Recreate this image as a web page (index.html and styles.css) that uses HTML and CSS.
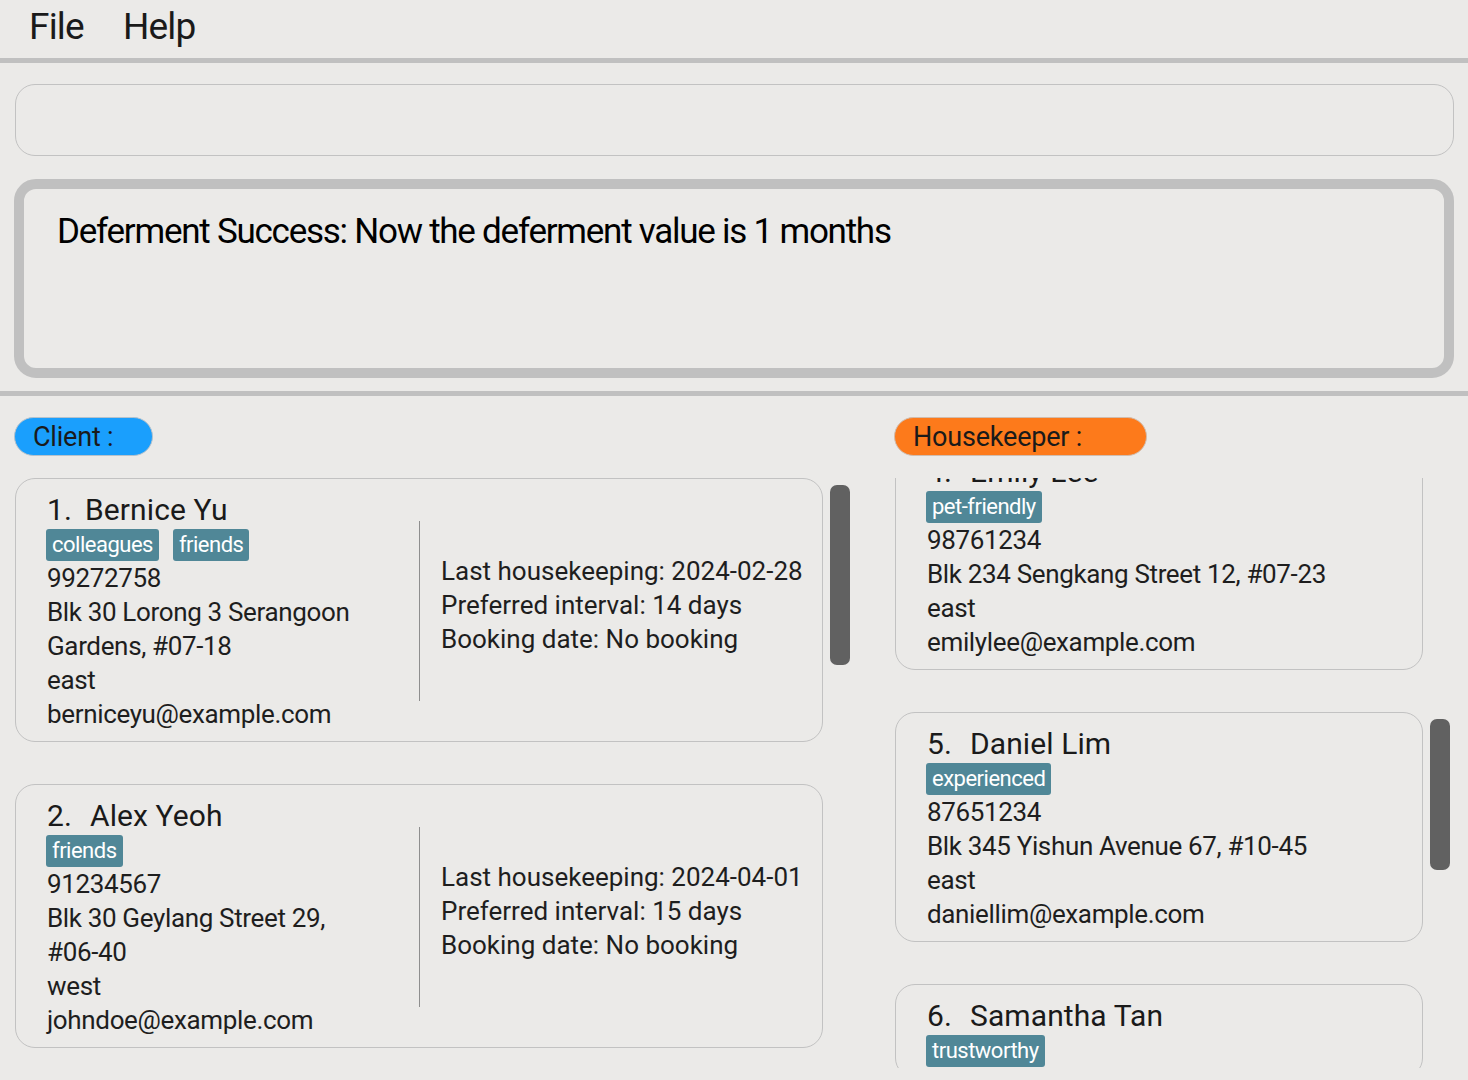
FILE: index.html
```html
<!DOCTYPE html>
<html lang="en">
<head>
<meta charset="utf-8">
<title>Housekeeping Hub</title>
<link rel="stylesheet" href="styles.css">
</head>
<body>
<header class="menubar">
  <span class="menu-item">File</span>
  <span class="menu-item">Help</span>
</header>

<section class="top">
  <div class="command-box"></div>
  <div class="result-box">
    <p class="result-text">Deferment Success: Now the deferment value is 1 months</p>
  </div>
</section>

<main class="lists">
  <section class="panel">
    <div class="pill pill-client">Client :</div>
    <div class="viewport">
      <div class="cards">
        <article class="card">
          <div class="card-left">
            <div class="name"><span class="idx idx-narrow">1.</span>Bernice Yu</div>
            <div class="tags"><span class="tag">colleagues</span><span class="tag">friends</span></div>
            <div class="line">99272758</div>
            <div class="line">Blk 30 Lorong 3 Serangoon Gardens, #07-18</div>
            <div class="line">east</div>
            <div class="line">berniceyu@example.com</div>
          </div>
          <div class="card-right">
            <div class="line">Last housekeeping: 2024-02-28</div>
            <div class="line">Preferred interval: 14 days</div>
            <div class="line">Booking date: No booking</div>
          </div>
        </article>
        <article class="card">
          <div class="card-left">
            <div class="name"><span class="idx">2.</span>Alex Yeoh</div>
            <div class="tags"><span class="tag">friends</span></div>
            <div class="line">91234567</div>
            <div class="line">Blk 30 Geylang Street 29, <span class="nowrap">#06-40</span></div>
            <div class="line">west</div>
            <div class="line">johndoe@example.com</div>
          </div>
          <div class="card-right">
            <div class="line">Last housekeeping: 2024-04-01</div>
            <div class="line">Preferred interval: 15 days</div>
            <div class="line">Booking date: No booking</div>
          </div>
        </article>
      </div>
      <div class="scroll-track"><div class="scroll-thumb" style="margin-top:7px;height:180px"></div></div>
    </div>
  </section>

  <section class="panel">
    <div class="pill pill-hk">Housekeeper :</div>
    <div class="viewport">
      <div class="cards cards-scrolled">
        <article class="card card-hk">
          <div class="card-left">
            <div class="name"><span class="idx">4.</span>Emily Lee</div>
            <div class="tags"><span class="tag">pet-friendly</span></div>
            <div class="line">98761234</div>
            <div class="line">Blk 234 Sengkang Street 12, #07-23</div>
            <div class="line">east</div>
            <div class="line">emilylee@example.com</div>
          </div>
        </article>
        <article class="card card-hk">
          <div class="card-left">
            <div class="name"><span class="idx">5.</span>Daniel Lim</div>
            <div class="tags"><span class="tag">experienced</span></div>
            <div class="line">87651234</div>
            <div class="line">Blk 345 Yishun Avenue 67, #10-45</div>
            <div class="line">east</div>
            <div class="line">daniellim@example.com</div>
          </div>
        </article>
        <article class="card card-hk">
          <div class="card-left">
            <div class="name"><span class="idx">6.</span>Samantha Tan</div>
            <div class="tags"><span class="tag">trustworthy</span></div>
          </div>
        </article>
      </div>
      <div class="scroll-track"><div class="scroll-thumb" style="margin-top:241px;height:151px"></div></div>
    </div>
  </section>
</main>
</body>
</html>
```

FILE: styles.css
```css
* { box-sizing: border-box; }

html, body {
  margin: 0;
  padding: 0;
  background: #ebeae8;
  color: #1e1e1e;
  font-family: Roboto, Inter, "Liberation Sans", sans-serif;
  height: 1080px;
  overflow: hidden;
}

.menubar {
  height: 63px;
  border-bottom: 5px solid #c0c0c0;
  display: flex;
  align-items: flex-start;
  padding: 1px 0 0 29px;
  gap: 39px;
}

.menu-item {
  font-size: 37px;
  line-height: 51px;
  color: #1a1a1a;
  letter-spacing: -0.8px;
}

.top {
  padding: 21px 14px 0 14px;
  border-bottom: 5px solid #c0c0c0;
}

.command-box {
  height: 72px;
  margin-left: 1px;
  border: 1px solid #c2c2c2;
  border-radius: 20px;
}

.result-box {
  margin-top: 23px;
  margin-bottom: 13px;
  height: 199px;
  border: 10px solid #c0c0c0;
  border-radius: 22px;
  padding: 22px 33px 0 33px;
}

.result-text {
  margin: 0;
  font-size: 35px;
  line-height: 42px;
  color: #000;
  letter-spacing: -1.25px;
}

.lists {
  display: grid;
  grid-template-columns: 837px 557px;
  column-gap: 43px;
  padding: 21px 0 0 14px;
}

.pill {
  height: 39px;
  border: 1px solid #c4c4c4;
  border-radius: 20px;
  padding-left: 18px;
  font-size: 27px;
  line-height: 38px;
  color: #1a1a1a;
  letter-spacing: -0.2px;
}

.pill-client { width: 139px; background: #1a9ffd; border-color: #b5c2cc; }
.pill-hk { width: 253px; background: #fd7a1b; border-color: #d0bcae; }

.viewport {
  margin-top: 22px;
  height: 590px;
  overflow: hidden;
  display: flex;
  align-items: flex-start;
  padding-left: 1px;
}

.cards {
  display: flex;
  flex-direction: column;
  gap: 42px;
}

.cards-scrolled { margin-top: -38px; }

.card {
  width: 808px;
  border: 1px solid #c2c2c2;
  border-radius: 20px;
  padding: 12px 31px 10px 31px;
  display: flex;
  align-items: center;
}

.card-hk { width: 528px; }

.card-left {
  width: 372px;
  padding-right: 40px;
  flex: none;
}

.card-hk .card-left {
  width: auto;
  flex: 1;
  padding-right: 0;
}

.name {
  font-size: 30px;
  line-height: 38px;
  color: #1a1a1a;
  white-space: nowrap;
  letter-spacing: 0.1px;
}

.idx {
  display: inline-block;
  width: 43px;
}

.idx-narrow { width: 38px; }

.tags {
  display: flex;
  gap: 14px;
  height: 32px;
  margin-left: -1px;
}

.tag {
  background: #508797;
  color: #fff;
  border-radius: 3px;
  padding: 0 6px;
  font-size: 22px;
  line-height: 32px;
  letter-spacing: -0.5px;
}

.line {
  font-size: 26px;
  line-height: 34px;
  color: #1e1e1e;
  letter-spacing: -0.35px;
}

.nowrap { white-space: nowrap; }

.card-right {
  height: 180px;
  border-left: 1px solid #8e8e8e;
  padding: 33px 0 0 21px;
  white-space: nowrap;
}

.card-right .line { letter-spacing: 0; }

.scroll-track {
  width: 20px;
  margin-left: 7px;
  flex: none;
}

.scroll-thumb {
  width: 20px;
  background: #616161;
  border-radius: 7px;
}
```
